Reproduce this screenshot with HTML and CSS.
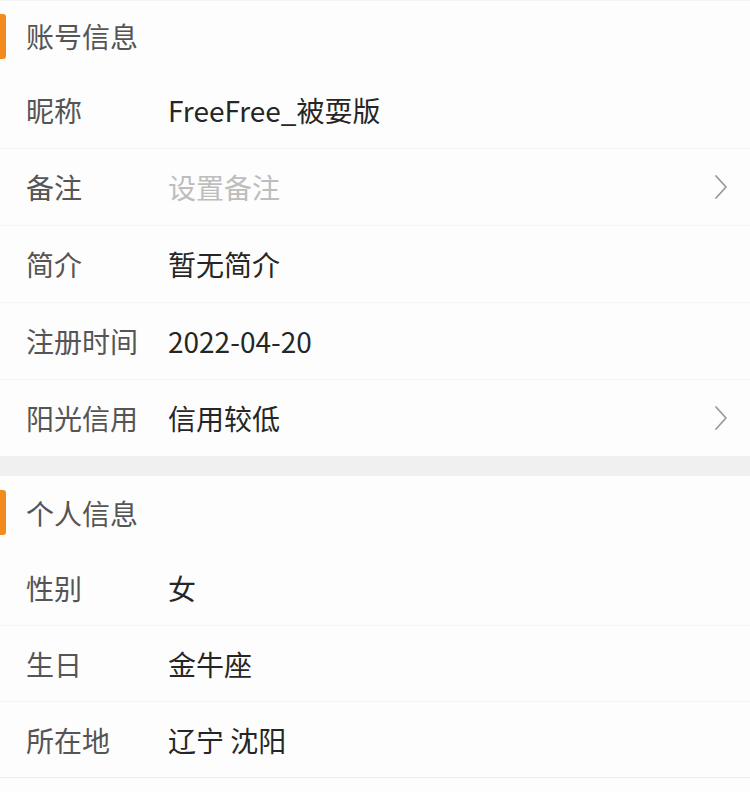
FILE: index.html
```html
<!DOCTYPE html>
<html lang="zh-CN">
<head>
<meta charset="utf-8">
<link rel="stylesheet" href="styles.css">
</head>
<body>
<div class="page">
  <section class="group first">
    <div class="head"><span class="bar"></span><span class="head-title">账号信息</span></div>
    <div class="row top"><span class="label">昵称</span><span class="value">FreeFree_被耍版</span></div>
    <div class="row"><span class="label">备注</span><span class="value placeholder">设置备注</span>
      <svg class="chev" viewBox="0 0 14 26" width="14" height="26"><path d="M2 2 L12 13 L2 24" fill="none" stroke="#9a9a9a" stroke-width="1.8" stroke-linecap="round" stroke-linejoin="round"/></svg></div>
    <div class="row"><span class="label">简介</span><span class="value">暂无简介</span></div>
    <div class="row"><span class="label">注册时间</span><span class="value">2022-04-20</span></div>
    <div class="row"><span class="label">阳光信用</span><span class="value">信用较低</span>
      <svg class="chev" viewBox="0 0 14 26" width="14" height="26"><path d="M2 2 L12 13 L2 24" fill="none" stroke="#9a9a9a" stroke-width="1.8" stroke-linecap="round" stroke-linejoin="round"/></svg></div>
  </section>
  <div class="gap"></div>
  <section class="group second">
    <div class="head"><span class="bar"></span><span class="head-title">个人信息</span></div>
    <div class="row top"><span class="label">性别</span><span class="value">女</span></div>
    <div class="row"><span class="label">生日</span><span class="value">金牛座</span></div>
    <div class="row last"><span class="label">所在地</span><span class="value">辽宁 沈阳</span></div>
  </section>
</div>
</body>
</html>
```
FILE: styles.css
```css
html, body {
  margin: 0;
  padding: 0;
  background: #fdfdfd;
}
.page {
  width: 750px;
  font-family: "Noto Sans CJK SC", "Noto Sans", sans-serif;
}
.group {
  background: #fdfdfd;
}
.head {
  display: flex;
  align-items: center;
  position: relative;
}
.first .head {
  height: 70px;
  border-top: 1px solid #f5f5f5;
}
.second .head {
  height: 73px;
}
.bar {
  position: absolute;
  left: 0;
  width: 6px;
  height: 45px;
  background: #f28a1e;
  border-radius: 0 3px 3px 0;
}
.first .bar {
  top: 13px;
}
.second .bar {
  top: 14px;
}
.head-title {
  margin-left: 26px;
  font-size: 28px;
  color: #555555;
  line-height: 1;
}
.row {
  display: flex;
  align-items: center;
  border-top: 1px solid #f4f4f4;
}
.row.top {
  border-top-color: transparent;
}
.row.last {
  border-bottom: 1px solid #efefef;
}
.first .row {
  height: 76px;
}
.second .row {
  height: 75px;
}
.label {
  width: 142px;
  margin-left: 26px;
  font-size: 28px;
  color: #555555;
  line-height: 1;
}
.value {
  flex: 1;
  font-size: 28px;
  color: #262626;
  line-height: 1;
}
.placeholder {
  color: #bdbdbd;
}
.chev {
  margin-right: 22px;
}
.gap {
  height: 20px;
  background: #f0f0f0;
}
```
